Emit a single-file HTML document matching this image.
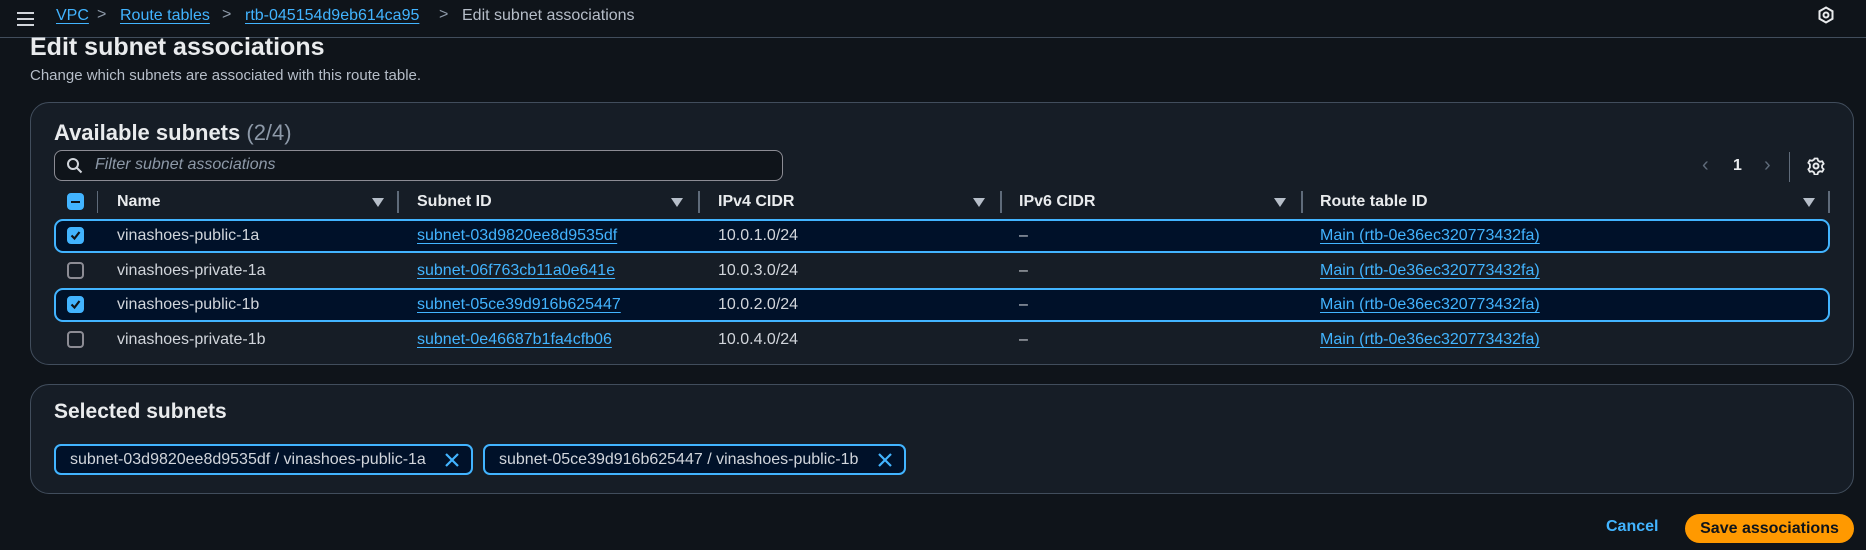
<!DOCTYPE html>
<html><head><meta charset="utf-8"><style>
*{box-sizing:border-box;margin:0;padding:0}
body{width:1866px;height:550px;background:#0f141a;font-family:"Liberation Sans",sans-serif;color:#d1d5db;position:relative;overflow:hidden;font-size:16px}
.a{position:absolute;white-space:nowrap}
.top{position:absolute;left:0;top:0;width:1866px;height:38px;background:#0f141a;border-bottom:1px solid #414d5c}
.lnk{color:#42b4ff;text-decoration:underline;text-underline-offset:3px}
.panel{position:absolute;border:1px solid #414d5c;border-radius:19px;background:#161d26}
.hd{font-weight:bold;color:#e9ebed;font-size:16px}
.sep{position:absolute;width:2px;height:22px;background:#5f6b7a}
.tri{position:absolute;width:0;height:0;border-left:6px solid transparent;border-right:6px solid transparent;border-top:9px solid #b6bec9}
.cb{position:absolute;width:17px;height:17px;border:2px solid #8c8c94;border-radius:4px}
.cbon{background:#42b4ff;border-color:#42b4ff}
.selrow{position:absolute;left:54px;width:1776px;height:34px;border:2px solid #42b4ff;border-radius:9px;background:#001129}
.chip{position:absolute;top:444px;height:31px;border:2px solid #42b4ff;border-radius:7px;background:#001129;color:#d1d5db;font-size:16px;line-height:27px;padding-left:14px}
</style></head><body>
<div class="top">
 <div class="a" style="left:17px;top:12px;width:17px;height:2px;background:#d1d5db;box-shadow:0 6px 0 #d1d5db,0 12px 0 #d1d5db"></div>
 <div class="a lnk" style="left:56px;top:7px;font-size:16px">VPC</div>
 <div class="a" style="left:97px;top:6px;color:#8d99a8;font-size:16px">&gt;</div>
 <div class="a lnk" style="left:120px;top:7px;font-size:16px">Route tables</div>
 <div class="a" style="left:222px;top:6px;color:#8d99a8">&gt;</div>
 <div class="a lnk" style="left:245px;top:7px;font-size:16px">rtb-045154d9eb614ca95</div>
 <div class="a" style="left:439px;top:6px;color:#8d99a8">&gt;</div>
 <div class="a" style="left:462px;top:7px;color:#b6bec9;font-size:16px">Edit subnet associations</div>
 <svg class="a" style="left:1817px;top:6px" width="18" height="18" viewBox="0 0 18 18"><path d="M9 1.5 15.5 5.2v7.6L9 16.5 2.5 12.8V5.2Z" fill="none" stroke="#e9ebed" stroke-width="2"/><circle cx="9" cy="9" r="2.5" fill="none" stroke="#e9ebed" stroke-width="2"/></svg>
</div>
<div class="a" style="left:30px;top:33px;font-size:25px;font-weight:bold;color:#e9ebed">Edit subnet associations</div>
<div class="a" style="left:30px;top:67px;font-size:15px;color:#b6bec9">Change which subnets are associated with this route table.</div>

<div class="panel" style="left:30px;top:102px;width:1824px;height:263px"></div>
<div class="a" style="left:54px;top:120px;font-size:22px;font-weight:bold;color:#e9ebed">Available subnets <span style="font-weight:normal;color:#8d99a8">(2/4)</span></div>
<div class="a" style="left:54px;top:150px;width:729px;height:31px;border:1px solid #8c8c94;border-radius:8px;background:#0f141a"></div>
<svg class="a" style="left:66px;top:157px" width="17" height="17" viewBox="0 0 17 17"><circle cx="7" cy="7" r="5" fill="none" stroke="#d1d5db" stroke-width="2"/><path d="M11 11l4.5 4.5" stroke="#d1d5db" stroke-width="2"/></svg>
<div class="a" style="left:95px;top:156px;font-style:italic;color:#8d99a8;font-size:16px">Filter subnet associations</div>
<div class="a" style="left:1702px;top:154px;color:#5f6b7a;font-size:20px">&#8249;</div>
<div class="a" style="left:1733px;top:157px;font-weight:bold;color:#e9ebed;font-size:16px">1</div>
<div class="a" style="left:1764px;top:154px;color:#5f6b7a;font-size:20px">&#8250;</div>
<div class="sep" style="left:1789px;top:152px;height:30px;width:1px"></div>
<svg class="a" style="left:1807px;top:157px" width="18" height="18" viewBox="0 0 18 18"><circle cx="9" cy="9" r="2.5" fill="none" stroke="#e9ebed" stroke-width="2"/><path d="M7.5 1.5h3l.6 2.2 1.9 1.1 2.2-.6 1.5 2.6-1.6 1.6v2.2l1.6 1.6-1.5 2.6-2.2-.6-1.9 1.1-.6 2.2h-3l-.6-2.2-1.9-1.1-2.2.6-1.5-2.6 1.6-1.6V7.4L1.3 5.8l1.5-2.6 2.2.6 1.9-1.1Z" fill="none" stroke="#e9ebed" stroke-width="1.8" stroke-linejoin="round"/></svg>

<div class="cb cbon" style="left:67px;top:193px"><div style="position:absolute;left:2px;top:5.5px;width:9px;height:2px;background:#0f141a"></div></div>
<div class="sep" style="left:97px;top:191px;width:1px"></div>
<div class="a hd" style="left:117px;top:193px">Name</div><div class="tri" style="left:372px;top:198px"></div><div class="sep" style="left:397px;top:191px"></div>
<div class="a hd" style="left:417px;top:193px">Subnet ID</div><div class="tri" style="left:671px;top:198px"></div><div class="sep" style="left:698px;top:191px"></div>
<div class="a hd" style="left:718px;top:193px">IPv4 CIDR</div><div class="tri" style="left:973px;top:198px"></div><div class="sep" style="left:1000px;top:191px"></div>
<div class="a hd" style="left:1019px;top:193px">IPv6 CIDR</div><div class="tri" style="left:1274px;top:198px"></div><div class="sep" style="left:1301px;top:191px"></div>
<div class="a hd" style="left:1320px;top:193px">Route table ID</div><div class="tri" style="left:1803px;top:198px"></div><div class="sep" style="left:1828px;top:191px"></div>

<div class="selrow" style="top:219px"></div>
<div class="selrow" style="top:288px"></div>

<div class="cb cbon" style="left:67px;top:227px"><svg width="13" height="13" style="position:absolute;left:0;top:0"><path d="M2.5 6.5l3 3 5-6.5" fill="none" stroke="#0f141a" stroke-width="2.2"/></svg></div>
<div class="a" style="left:117px;top:227px">vinashoes-public-1a</div>
<div class="a lnk" style="left:417px;top:227px">subnet-03d9820ee8d9535df</div>
<div class="a" style="left:718px;top:227px">10.0.1.0/24</div>
<div class="a" style="left:1019px;top:227px">–</div>
<div class="a lnk" style="left:1320px;top:227px">Main (rtb-0e36ec320773432fa)</div>

<div class="cb" style="left:67px;top:262px"></div>
<div class="a" style="left:117px;top:262px">vinashoes-private-1a</div>
<div class="a lnk" style="left:417px;top:262px">subnet-06f763cb11a0e641e</div>
<div class="a" style="left:718px;top:262px">10.0.3.0/24</div>
<div class="a" style="left:1019px;top:262px">–</div>
<div class="a lnk" style="left:1320px;top:262px">Main (rtb-0e36ec320773432fa)</div>

<div class="cb cbon" style="left:67px;top:296px"><svg width="13" height="13" style="position:absolute;left:0;top:0"><path d="M2.5 6.5l3 3 5-6.5" fill="none" stroke="#0f141a" stroke-width="2.2"/></svg></div>
<div class="a" style="left:117px;top:296px">vinashoes-public-1b</div>
<div class="a lnk" style="left:417px;top:296px">subnet-05ce39d916b625447</div>
<div class="a" style="left:718px;top:296px">10.0.2.0/24</div>
<div class="a" style="left:1019px;top:296px">–</div>
<div class="a lnk" style="left:1320px;top:296px">Main (rtb-0e36ec320773432fa)</div>

<div class="cb" style="left:67px;top:331px"></div>
<div class="a" style="left:117px;top:331px">vinashoes-private-1b</div>
<div class="a lnk" style="left:417px;top:331px">subnet-0e46687b1fa4cfb06</div>
<div class="a" style="left:718px;top:331px">10.0.4.0/24</div>
<div class="a" style="left:1019px;top:331px">–</div>
<div class="a lnk" style="left:1320px;top:331px">Main (rtb-0e36ec320773432fa)</div>

<div class="panel" style="left:30px;top:384px;width:1824px;height:110px"></div>
<div class="a" style="left:54px;top:400px;font-size:21px;font-weight:bold;color:#e9ebed">Selected subnets</div>
<div class="chip" style="left:54px;width:419px">subnet-03d9820ee8d9535df / vinashoes-public-1a<svg style="position:absolute;right:12px;top:7px" width="14" height="14"><path d="M1 1l12 12M13 1 1 13" stroke="#42b4ff" stroke-width="2.2"/></svg></div>
<div class="chip" style="left:483px;width:423px">subnet-05ce39d916b625447 / vinashoes-public-1b<svg style="position:absolute;right:12px;top:7px" width="14" height="14"><path d="M1 1l12 12M13 1 1 13" stroke="#42b4ff" stroke-width="2.2"/></svg></div>

<div class="a" style="left:1606px;top:518px;color:#42b4ff;font-weight:bold;font-size:16px">Cancel</div>
<div class="a" style="left:1685px;top:514px;width:169px;height:29px;border-radius:15px;background:#ff9900;color:#0f141a;font-weight:bold;font-size:16px;line-height:29px;text-align:center">Save associations</div>
</body></html>
